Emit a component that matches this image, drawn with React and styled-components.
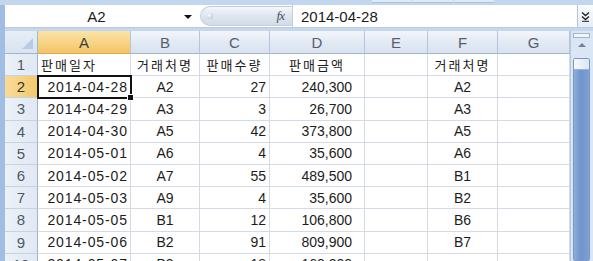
import React from "react";
import styled, { createGlobalStyle } from "styled-components";

const GlobalStyle = createGlobalStyle`
  html, body {
    margin: 0;
    padding: 0;
    overflow: hidden;
    background: #c4d7ee;
  }
  * { box-sizing: border-box; }
`;

const Frame = styled.div`
  width: 593px;
  height: 261px;
  display: flex;
  flex-direction: column;
  overflow: hidden;
  font-family: "Liberation Sans", Arial, "Noto Sans CJK KR", sans-serif;
  color: #1c1c1c;
`;

const TopBand = styled.div`
  height: 5px;
  display: flex;
  padding-left: 372px;
  gap: 1px;
  background: #c2d6ee;
`;

const Tab = styled.div`
  width: 40px;
  height: 3px;
  background: #dfeaf8;
  border-bottom: 1px solid #a9c3e4;
`;

const Body = styled.div`
  flex: 1;
  display: flex;
  flex-direction: column;
  border-left: 5px solid #a2bde3;
  min-height: 0;
`;

const FormulaRow = styled.div`
  height: 23px;
  display: flex;
  align-items: stretch;
  background: #fff;
  border-bottom: 1px solid #b8cbe3;
`;

const NameBox = styled.div`
  width: 195px;
  position: relative;
  display: flex;
  align-items: center;
  justify-content: center;
  font-size: 15px;
  padding-right: 12px;
`;

const DropArrow = styled.span`
  position: absolute;
  right: 8px;
  top: 10px;
  width: 0;
  height: 0;
  border-left: 4px solid transparent;
  border-right: 4px solid transparent;
  border-top: 4px solid #111;
`;

const FxPill = styled.div`
  width: 92px;
  margin: 1px 0;
  display: flex;
  align-items: center;
  justify-content: space-between;
  padding: 0 8px 0 6px;
  border-radius: 11px 0 0 11px;
  background: linear-gradient(#f4f7fb, #dde4ee 55%, #d2dbe7);
  border: 1px solid #c3cedd;
  border-right: none;
`;

const Grip = styled.span`
  width: 6px;
  height: 6px;
  border-radius: 50%;
  background: radial-gradient(circle at 35% 35%, #fff, #a9b6c8);
`;

const Fx = styled.span`
  font-family: "Liberation Serif", serif;
  font-style: italic;
  font-size: 13px;
  color: #46505e;
  letter-spacing: -1px;
`;

const FormulaInput = styled.div`
  flex: 1;
  display: flex;
  align-items: center;
  padding-left: 8px;
  font-size: 15px;
  border-left: 1px solid #c3cedd;
`;

const ExpandBtn = styled.div`
  width: 16px;
  display: flex;
  align-items: center;
  justify-content: center;
  border-left: 1px solid #b2c3da;
  background: linear-gradient(#fbfcfe, #e6edf6);
`;

const Gap = styled.div`
  height: 3px;
  background: #c4d7ee;
`;

const Sheet = styled.div`
  flex: 1;
  display: flex;
  min-height: 0;
  background: #fff;
`;

const Grid = styled.div`
  display: grid;
  grid-template-columns: 33px 93px 69px 70px 95px 63px 70px 72px;
  grid-auto-rows: 22.2px;
  grid-template-rows: 23px;
  align-content: start;
  overflow: hidden;
`;

const ColHead = styled.div`
  display: flex;
  align-items: center;
  justify-content: center;
  font-size: 15px;
  color: ${(p) => (p.$active ? "#3d3d3d" : "#56606c")};
  background: ${(p) =>
    p.$active
      ? "linear-gradient(#fbe3a6, #f8d587 50%, #f4c466)"
      : "linear-gradient(#f3f6fb, #e3eaf4 50%, #d9e2ee)"};
  border-right: 1px solid #b5c6dc;
  border-bottom: 1px solid ${(p) => (p.$active ? "#e2a74c" : "#9eb6ce")};
`;

const Corner = styled.div`
  position: relative;
  background: linear-gradient(#e6edf7, #d9e3f0);
  border-right: 1px solid #9eb6ce;
  border-bottom: 1px solid #9eb6ce;
  &::after {
    content: "";
    position: absolute;
    right: 4px;
    bottom: 4px;
    border-left: 11px solid transparent;
    border-bottom: 11px solid #b9cbe3;
  }
`;

const RowHead = styled.div`
  display: flex;
  align-items: center;
  justify-content: center;
  font-size: 15px;
  color: ${(p) => (p.$active ? "#333" : "#4d5966")};
  background: ${(p) =>
    p.$active
      ? "linear-gradient(90deg, #f9dc98, #f4c86c)"
      : "linear-gradient(90deg, #ecf1f8, #e1e8f2)"};
  border-right: 1px solid ${(p) => (p.$active ? "#e2a74c" : "#9eb6ce")};
  border-bottom: 1px solid #c5d3e3;
`;

const Cell = styled.div`
  position: relative;
  display: flex;
  align-items: center;
  justify-content: ${(p) =>
    p.$align === "right" ? "flex-end" : p.$align === "center" ? "center" : "flex-start"};
  padding: 0 ${(p) => p.$pad ?? 3}px 0 3px;
  font-size: ${(p) => (p.$ko ? "13px" : "14px")};
  font-family: ${(p) =>
    p.$ko ? '"Noto Sans CJK KR", sans-serif' : '"Liberation Sans", Arial, sans-serif'};
  letter-spacing: ${(p) => (p.$ko ? "2px" : p.$date ? "0.9px" : "0")};
  white-space: nowrap;
  border-right: 1px solid #d4dbe7;
  border-bottom: 1px solid #d4dbe7;
  ${(p) =>
    p.$selected &&
    `
    outline: 2px solid #111;
    outline-offset: -1px;
    z-index: 1;
    &::after {
      content: "";
      position: absolute;
      right: -4px;
      bottom: -4px;
      width: 5px;
      height: 5px;
      background: #111;
      border: 1px solid #fff;
    }
  `}
`;

const ScrollBar = styled.div`
  width: 23px;
  display: flex;
  flex-direction: column;
  background: #dbe6f4;
  border-left: 1px solid #b6c8e0;
  padding: 0 3px 0 2px;
`;

const SplitBox = styled.div`
  height: 5px;
  margin-top: 2px;
  border: 1px solid #9fb4d1;
  background: #f3f7fc;
`;

const UpBtn = styled.div`
  height: 14px;
  display: flex;
  align-items: center;
  justify-content: center;
  &::before {
    content: "";
    border-left: 4px solid transparent;
    border-right: 4px solid transparent;
    border-bottom: 4px solid #6f84a2;
  }
`;

const Thumb = styled.div`
  flex: 1;
  margin-top: 6px;
  display: flex;
  flex-direction: column;
  border: 1px solid #7b98c4;
  border-radius: 2px;
  background: linear-gradient(90deg, #8eaedb, #6f95cc 45%, #7ea0d3);
`;

const ThumbTop = styled.div`
  height: 11px;
  background: linear-gradient(90deg, #f7f9fc, #dde6f2);
  border-bottom: 1px solid #9bb1d2;
`;

const cols = ["A", "B", "C", "D", "E", "F", "G"];

const rows = [
  ["판매일자", "거래처명", "판매수량", "판매금액", "", "거래처명", ""],
  ["2014-04-28", "A2", "27", "240,300", "", "A2", ""],
  ["2014-04-29", "A3", "3", "26,700", "", "A3", ""],
  ["2014-04-30", "A5", "42", "373,800", "", "A5", ""],
  ["2014-05-01", "A6", "4", "35,600", "", "A6", ""],
  ["2014-05-02", "A7", "55", "489,500", "", "B1", ""],
  ["2014-05-03", "A9", "4", "35,600", "", "B2", ""],
  ["2014-05-05", "B1", "12", "106,800", "", "B6", ""],
  ["2014-05-06", "B2", "91", "809,900", "", "B7", ""],
  ["2014-05-07", "B3", "18", "160,200", "", "", ""],
];

const cellProps = (r, c) => {
  if (r === 0) {
    return { $ko: true, $align: c === 0 ? "left" : "center" };
  }
  if (c === 0) return { $align: "right", $date: true, $pad: 2 };
  if (c === 1 || c === 5) return { $align: "center" };
  if (c === 2) return { $align: "right", $pad: 3 };
  if (c === 3) return { $align: "right", $pad: 12 };
  return {};
};

export default function App() {
  return (
    <>
      <GlobalStyle />
      <Frame>
        <TopBand>
          <Tab />
          <Tab />
          <Tab />
        </TopBand>
        <Body>
          <FormulaRow>
            <NameBox>
              A2
              <DropArrow />
            </NameBox>
            <FxPill>
              <Grip />
              <Fx>fx</Fx>
            </FxPill>
            <FormulaInput>2014-04-28</FormulaInput>
            <ExpandBtn>
              <svg width="9" height="11" viewBox="0 0 9 11">
                <path d="M1 1.5 L4.5 4.5 L8 1.5 M1 5.5 L4.5 8.5 L8 5.5" fill="none" stroke="#222" strokeWidth="1.4" />
                <path d="M1 10.3 H8" stroke="#222" strokeWidth="1" />
              </svg>
            </ExpandBtn>
          </FormulaRow>
          <Gap />
          <Sheet>
            <Grid>
              <Corner />
              {cols.map((c) => (
                <ColHead key={c} $active={c === "A"}>
                  {c}
                </ColHead>
              ))}
              {rows.map((row, r) => (
                <React.Fragment key={r}>
                  <RowHead $active={r === 1}>{r + 1}</RowHead>
                  {row.map((v, c) => (
                    <Cell key={c} {...cellProps(r, c)} $selected={r === 1 && c === 0}>
                      {v}
                    </Cell>
                  ))}
                </React.Fragment>
              ))}
            </Grid>
            <ScrollBar>
              <SplitBox />
              <UpBtn />
              <Thumb>
                <ThumbTop />
              </Thumb>
            </ScrollBar>
          </Sheet>
        </Body>
      </Frame>
    </>
  );
}
